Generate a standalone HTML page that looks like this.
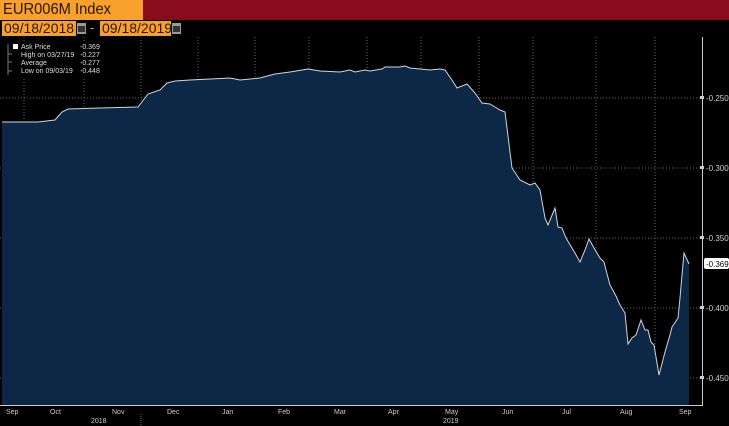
<!DOCTYPE html>
<html><head><meta charset="utf-8"><style>
body{margin:0;width:729px;height:426px;background:#000;overflow:hidden;position:relative;font-family:"Liberation Sans",sans-serif}
.red{position:absolute;left:0;top:0;width:729px;height:20px;background:#8a0c1c}
.t{position:absolute;left:0;top:0;width:143px;height:20px;background:#f7a12c}
.t span{position:absolute;left:3px;top:0;color:#2a1600;font-size:16px;line-height:20px;transform:scaleX(0.92);transform-origin:left}
.d{position:absolute;top:21px;height:15px;background:#f7a12c;color:#2a1600;font-size:14px;line-height:15px;padding-left:2px;box-sizing:border-box}
.ic{position:absolute;top:23px;width:9px;height:11px;background:#9a9a9a}
.ic:after{content:"";position:absolute;left:1px;top:3px;width:7px;height:6px;background:#333}
</style></head><body>
<div class="red"></div>
<div class="t"><span>EUR006M Index</span></div>
<div class="d" style="left:2px;width:74px">09/18/2018</div><div class="ic" style="left:77px"></div>
<div style="position:absolute;left:90px;top:20px;color:#f7a12c;font-size:13px">-</div>
<div class="d" style="left:100px;width:71px">09/18/2019</div><div class="ic" style="left:172px"></div>
<svg width="729" height="426" style="position:absolute;left:0;top:0" font-family="Liberation Sans, sans-serif">
<g stroke="#666" stroke-width="1" stroke-dasharray="1,2">
<line x1="0" y1="98" x2="702" y2="98"/><line x1="0" y1="168" x2="702" y2="168"/><line x1="0" y1="238" x2="702" y2="238"/><line x1="0" y1="308" x2="702" y2="308"/><line x1="0" y1="378" x2="702" y2="378"/>
<line x1="24" y1="37" x2="24" y2="405"/><line x1="84" y1="37" x2="84" y2="405"/><line x1="141" y1="37" x2="141" y2="405"/><line x1="198" y1="37" x2="198" y2="405"/><line x1="255" y1="37" x2="255" y2="405"/><line x1="309" y1="37" x2="309" y2="405"/><line x1="367" y1="37" x2="367" y2="405"/><line x1="421" y1="37" x2="421" y2="405"/><line x1="479" y1="37" x2="479" y2="405"/><line x1="533" y1="37" x2="533" y2="405"/><line x1="596" y1="37" x2="596" y2="405"/><line x1="655" y1="37" x2="655" y2="405"/>
</g>
<path d="M2,122 L38,122 L55,120 L62,112 L68,109 L100,108 L138,107 L148,94 L160,90 L167,83 L175,81 L190,80 L230,78 L240,80 L260,78 L275,74 L290,72 L308,69 L320,71 L340,72 L350,70 L355,72 L365,70 L370,71 L382,69 L385,67 L400,67 L405,66 L410,68 L430,70 L440,69 L445,70 L452,80 L457,88 L467,84 L475,93 L482,103 L490,104 L495,107 L500,110 L505,112 L512,168 L520,180 L530,185 L535,183 L540,190 L545,218 L548,225 L555,208 L558,227 L562,228 L566,238 L572,248 L575,253 L580,262 L585,250 L589,239 L594,248 L600,258 L604,262 L606,270 L610,285 L616,296 L620,305 L625,313 L628,344 L632,338 L636,335 L641,320 L645,330 L648,330 L651,342 L654,345 L659,375 L665,352 L670,335 L672,327 L676,321 L678,318 L680,298 L682,275 L684,253 L689,264 L689,405 L2,405 Z" fill="#0d2846" stroke="none"/>
<path d="M2,122 L38,122 L55,120 L62,112 L68,109 L100,108 L138,107 L148,94 L160,90 L167,83 L175,81 L190,80 L230,78 L240,80 L260,78 L275,74 L290,72 L308,69 L320,71 L340,72 L350,70 L355,72 L365,70 L370,71 L382,69 L385,67 L400,67 L405,66 L410,68 L430,70 L440,69 L445,70 L452,80 L457,88 L467,84 L475,93 L482,103 L490,104 L495,107 L500,110 L505,112 L512,168 L520,180 L530,185 L535,183 L540,190 L545,218 L548,225 L555,208 L558,227 L562,228 L566,238 L572,248 L575,253 L580,262 L585,250 L589,239 L594,248 L600,258 L604,262 L606,270 L610,285 L616,296 L620,305 L625,313 L628,344 L632,338 L636,335 L641,320 L645,330 L648,330 L651,342 L654,345 L659,375 L665,352 L670,335 L672,327 L676,321 L678,318 L680,298 L682,275 L684,253 L689,264" fill="none" stroke="#cfd6e0" stroke-width="1"/>
<line x1="702.5" y1="37" x2="702.5" y2="406" stroke="#ccc"/>
<line x1="0" y1="405.5" x2="703" y2="405.5" stroke="#ccc"/>
<g fill="#ccc" font-size="8">
<text x="706" y="101">-0.250</text><text x="706" y="171">-0.300</text><text x="706" y="241">-0.350</text><text x="706" y="311">-0.400</text><text x="706" y="381">-0.450</text>
<rect x="700" y="96" width="4" height="3"/><rect x="700" y="166" width="4" height="3"/><rect x="700" y="236" width="4" height="3"/><rect x="700" y="306" width="4" height="3"/><rect x="700" y="376" width="4" height="3"/>
</g>
<rect x="704" y="258" width="25" height="11" rx="2" fill="#fff"/>
<text x="706" y="267" font-size="8" fill="#000">-0.369</text>
<g fill="#ccc" font-size="7">
<text x="6" y="414">Sep</text><text x="50" y="414">Oct</text><text x="112" y="414">Nov</text><text x="167" y="414">Dec</text><text x="222" y="414">Jan</text><text x="278" y="414">Feb</text><text x="334" y="414">Mar</text><text x="388" y="414">Apr</text><text x="445" y="414">May</text><text x="502" y="414">Jun</text><text x="562" y="414">Jul</text><text x="620" y="414">Aug</text><text x="679" y="414">Sep</text>
<text x="91" y="423">2018</text><text x="443" y="423">2019</text>
</g>
<line x1="141" y1="414" x2="141" y2="426" stroke="#666" stroke-dasharray="1,1"/>
<rect x="4" y="41" width="98" height="37" fill="#000"/>
<rect x="13" y="44" width="5" height="5" fill="#fff"/>
<g fill="#ddd" font-size="7">
<text x="21" y="49">Ask Price</text><text x="80" y="49">-0.369</text>
<text x="21" y="57">High on 03/27/19</text><text x="80" y="57">-0.227</text>
<text x="21" y="65">Average</text><text x="80" y="65">-0.277</text>
<text x="21" y="73">Low on 09/03/19</text><text x="80" y="73">-0.448</text>
</g>
<path d="M8,44 V75 M8,54 H12 M8,62 H12 M8,71 H12" stroke="#777" stroke-width="1" fill="none"/>
</svg>
</body></html>
